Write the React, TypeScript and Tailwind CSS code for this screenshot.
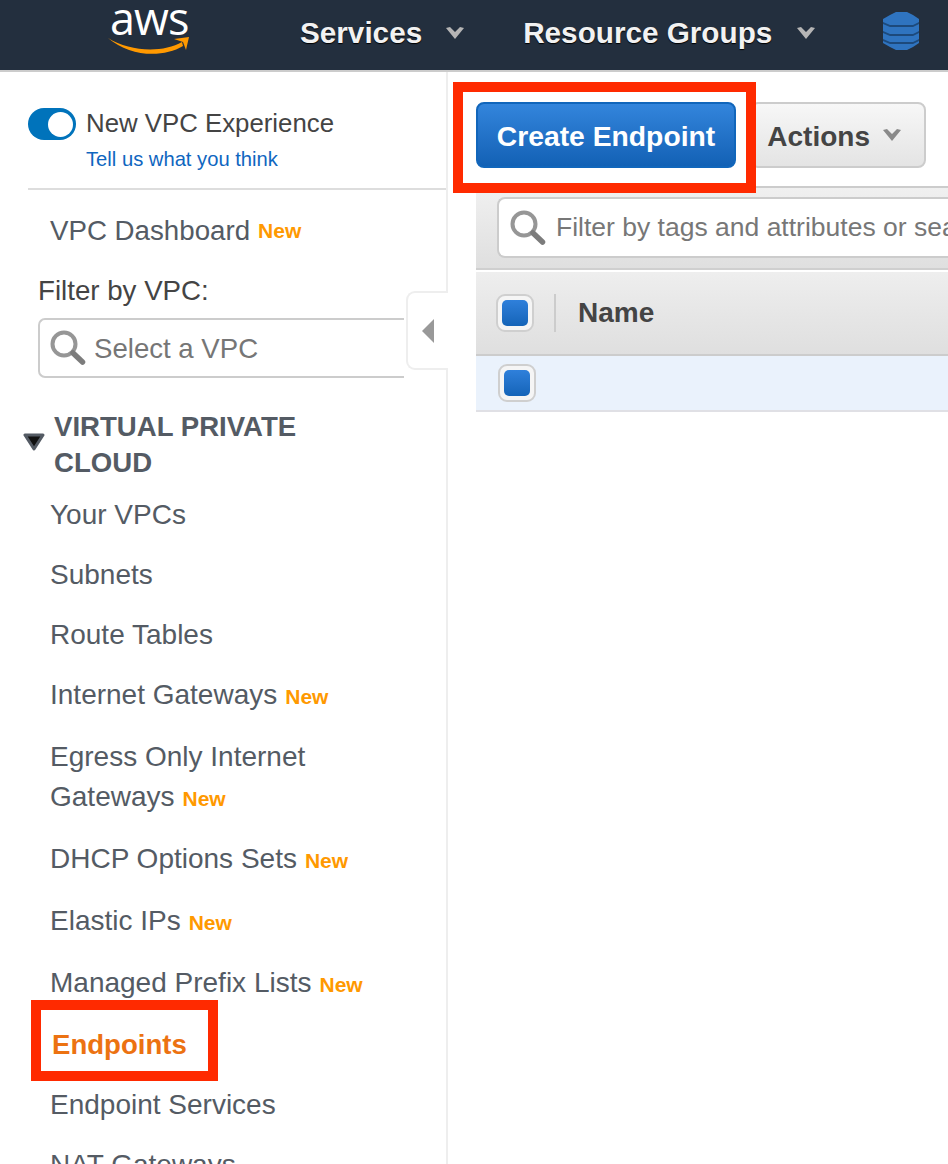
const font = "font-['Liberation_Sans',Arial,sans-serif]";

type NavItem = { lines: string[]; isNew?: boolean };

const navItems: NavItem[] = [
  { lines: ['Your VPCs'] },
  { lines: ['Subnets'] },
  { lines: ['Route Tables'] },
  { lines: ['Internet Gateways'], isNew: true },
  { lines: ['Egress Only Internet', 'Gateways'], isNew: true },
  { lines: ['DHCP Options Sets'], isNew: true },
  { lines: ['Elastic IPs'], isNew: true },
  { lines: ['Managed Prefix Lists'], isNew: true },
];

function NewTag() {
  return <span className="ml-2 text-[21px] font-bold text-[#ff9900]">New</span>;
}

function SearchIcon() {
  return (
    <svg width="38" height="38" viewBox="0 0 38 38" className="shrink-0" aria-hidden="true">
      <circle cx="15" cy="15" r="11.5" fill="#fff" stroke="#969696" strokeWidth="4" />
      <path d="M24 24 L33.5 33" stroke="#7c7c7c" strokeWidth="5.5" strokeLinecap="round" />
    </svg>
  );
}

function Chevron({ color }: { color: string }) {
  return (
    <svg width="20" height="14" viewBox="0 0 20 14" aria-hidden="true">
      <path d="M1 2 L5 1 L10 6 L15 1 L19 2 L10 13 Z" fill={color} />
    </svg>
  );
}

function Check() {
  return (
    <span className="flex size-[38px] shrink-0 items-center justify-center rounded-[9px] border-2 border-[#cfcfcf] bg-[#f5f5f5]">
      <span className="size-[26px] rounded-[5px] bg-gradient-to-b from-[#2f80db] to-[#1464b8]" />
    </span>
  );
}

function Header() {
  return (
    <header className="flex h-[72px] shrink-0 items-center border-b-2 border-[#cccccc] bg-[#232f3e] pb-[4px]">
      <div className="relative ml-[108px] h-[66px] w-[84px] shrink-0">
        <span className="absolute left-[2px] top-0 font-['Open_Sans',sans-serif] text-[45px] font-medium leading-[36px] tracking-[-1px] text-white">aws</span>
        <svg width="84" height="20" viewBox="0 0 84 20" className="absolute left-0 top-[36px]" aria-hidden="true">
          <path d="M0 2 C22 16 55 17 74 6 L75 10 C55 22 22 21 0 2 Z" fill="#ff9900" />
          <path d="M66 3 L81 1 L78 14 L75 6 Z" fill="#ff9900" />
        </svg>
      </div>
      <span className="ml-[108px] text-[29.7px] font-bold text-[#f2f2f2] [text-shadow:0_1px_1px_#000]">Services</span>
      <span className="ml-[23px]"><Chevron color="#b5b5b5" /></span>
      <span className="ml-[58px] text-[29.7px] font-bold text-[#f2f2f2] [text-shadow:0_1px_1px_#000]">Resource Groups</span>
      <span className="ml-[24px]"><Chevron color="#b5b5b5" /></span>
      <svg width="38" height="38" viewBox="0 0 38 38" className="-mt-[4px] ml-[66px]" aria-hidden="true">
        <path d="M8 3 L14 0 H25 L31 3 L37 7 V31 L31 35 L25 38 H14 L8 35 L1 31 V7 Z" fill="#2f74c0" />
        <path d="M1 10 L8 13 H31 L37 10 V12 L31 15 H8 L1 12 Z" fill="#1d4a7c" />
        <path d="M1 19 L8 22 H31 L37 19 V21 L31 24 H8 L1 21 Z" fill="#1d4a7c" />
        <path d="M1 27 L8 30 H31 L37 27 V29 L31 32 H8 L1 29 Z" fill="#1d4a7c" />
      </svg>
    </header>
  );
}

function Sidebar() {
  return (
    <aside className="relative h-full w-[448px] shrink-0 border-r-2 border-[#eeeeee] pl-[28px]">
      <div className="h-[118px] border-b-2 border-[#dddddd] pt-[36px]">
        <div className="flex items-center">
          <span className="flex h-[32px] w-[48px] items-center justify-end rounded-full bg-[#0073bb] pr-[3px]">
            <span className="size-[25px] rounded-full bg-white" />
          </span>
          <span className="-mt-[2px] ml-[10px] text-[25.8px] leading-[30px] text-[#444444]">New VPC Experience</span>
        </div>
        <a className="ml-[58px] mt-[6px] block text-[20.2px] leading-[26px] text-[#0f66bf]">Tell us what you think</a>
      </div>
      <div className="ml-[22px] mt-[21px] flex items-center text-[27.7px] leading-[40px] text-[#545b64]">
        VPC Dashboard<NewTag />
      </div>
      <div className="ml-[10px] mt-[20px] text-[27.7px] leading-[40px] text-[#444444]">Filter by VPC:</div>
      <div className="ml-[10px] mt-[7px] flex h-[60px] w-[366px] items-center rounded-l-[7px] border-y-2 border-l-2 border-[#cccccc] pl-[9px]">
        <SearchIcon />
        <span className="ml-[7px] pt-[2px] text-[27.6px] text-[#767676]">Select a VPC</span>
      </div>
      <div className="mt-[31px] flex">
        <svg width="22" height="18" viewBox="0 0 22 18" className="ml-[-5px] mt-[24px] shrink-0" aria-hidden="true">
          <path d="M2 2 H20 L11 16 Z" fill="#111111" stroke="#545b64" strokeWidth="3" strokeLinejoin="round" />
        </svg>
        <div className="ml-[9px] w-[300px] text-[27.6px] font-bold leading-[36px] text-[#545b64]">VIRTUAL PRIVATE CLOUD</div>
      </div>
      <ul className="ml-[22px] mt-[4px] text-[28px] leading-[40px] text-[#545b64]">
        {navItems.map((item) => (
          <li key={item.lines[0]} className="py-[10px]">
            {item.lines.map((line, i) => (
              <div key={line}>
                {line}
                {item.isNew && i === item.lines.length - 1 && <NewTag />}
              </div>
            ))}
          </li>
        ))}
        <li className="ml-[2px] py-[10px] text-[27.6px] font-bold text-[#ec7211]">Endpoints</li>
        <li className="py-[10px]">Endpoint Services</li>
        <li className="py-[10px]">NAT Gateways</li>
      </ul>
      {/* collapse handle */}
      <div className="absolute right-[-2px] top-[219px] flex h-[79px] w-[42px] items-center justify-center rounded-l-[9px] border-y-2 border-l-2 border-[#eeeeee] bg-white">
        <svg width="14" height="24" viewBox="0 0 14 24" aria-hidden="true">
          <path d="M13 0 V24 L1 12 Z" fill="#999999" />
        </svg>
      </div>
    </aside>
  );
}

function Main() {
  return (
    <main className="min-w-0 flex-1 overflow-hidden pl-[28px] pt-[30px]">
      <div className="flex">
        <button className="flex h-[66px] w-[260px] shrink-0 items-center justify-center rounded-[8px] border-2 border-[#1166bb] bg-gradient-to-b from-[#3385dc] to-[#1261b5] pt-[3px] text-[28.3px] font-bold text-white">
          Create Endpoint
        </button>
        <button className="ml-[14px] flex h-[66px] w-[176px] shrink-0 items-center justify-end gap-[12px] rounded-[8px] border-2 border-[#cccccc] bg-gradient-to-b from-[#f7f7f7] to-[#e4e4e4] pr-[22px] text-[28px] font-bold text-[#444444]">
          <span className="pt-[3px]">Actions</span>
          <Chevron color="#8a8a8a" />
        </button>
      </div>
      <div className="mt-[18px] w-[520px] border-y-2 border-[#cccccc] border-b-[#cfcfcf] bg-gradient-to-b from-[#f0f0f0] to-[#dfdfdf] pb-[10px] pl-[21px] pt-[9px]">
        <div className="flex h-[61px] items-center rounded-l-[8px] border-2 border-r-0 border-[#cccccc] bg-white pl-[10px]">
          <SearchIcon />
          <span className="ml-[9px] whitespace-nowrap text-[26.5px] text-[#777777]">Filter by tags and attributes or search by keyword</span>
        </div>
      </div>
      <div className="mt-[2px] flex h-[84px] items-center border-b-2 border-[#cccccc] bg-gradient-to-b from-[#eeeeee] to-[#dfdfdf] pl-[20px]">
        <Check />
        <span className="ml-[20px] h-[38px] w-[2px] bg-[#cccccc]" />
        <span className="ml-[22px] text-[28px] font-bold text-[#444444]">Name</span>
      </div>
      <div className="flex h-[56px] items-center border-b-2 border-[#e0e0e5] bg-[#eaf2fc] pl-[22px]">
        <Check />
      </div>
    </main>
  );
}

export default function App() {
  return (
    <div className={`relative flex h-[1164px] w-[948px] flex-col overflow-hidden bg-white ${font}`}>
      <Header />
      <div className="flex min-h-0 flex-1">
        <Sidebar />
        <Main />
      </div>
      {/* annotation boxes drawn over the page */}
      <div className="pointer-events-none absolute left-[453px] top-[82px] h-[111px] w-[303px] border-[10px] border-[#ff2a00]" />
      <div className="pointer-events-none absolute left-[31px] top-[1000px] h-[81px] w-[187px] border-[10px] border-[#ff2a00]" />
    </div>
  );
}
